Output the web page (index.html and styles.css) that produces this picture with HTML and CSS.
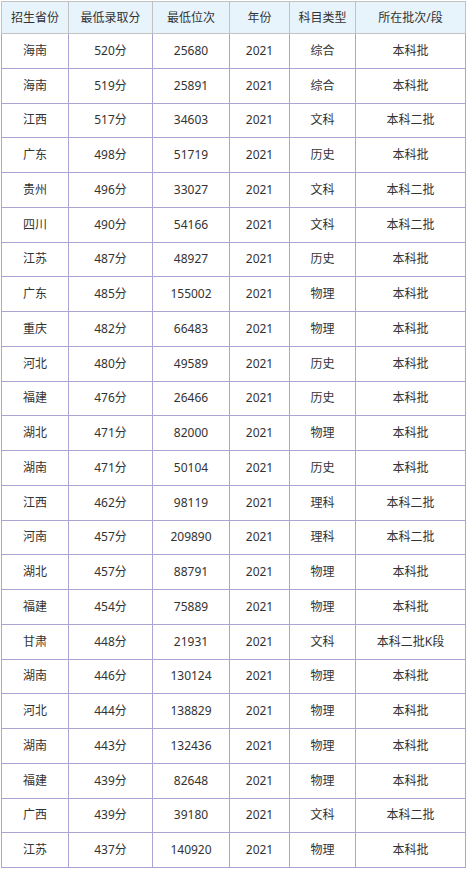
FILE: index.html
```html
<!DOCTYPE html>
<html lang="zh-CN">
<head>
<meta charset="utf-8">
<title>录取分数</title>
<link rel="stylesheet" href="styles.css">
</head>
<body>
<table class="score-table">
  <colgroup>
    <col class="c1"><col class="c2"><col class="c3"><col class="c4"><col class="c5"><col class="c6">
  </colgroup>
  <thead>
    <tr><th>招生省份</th><th>最低录取分</th><th>最低位次</th><th>年份</th><th>科目类型</th><th>所在批次/段</th></tr>
  </thead>
  <tbody>
    <tr><td>海南</td><td>520分</td><td>25680</td><td>2021</td><td>综合</td><td>本科批</td></tr>
    <tr><td>海南</td><td>519分</td><td>25891</td><td>2021</td><td>综合</td><td>本科批</td></tr>
    <tr><td>江西</td><td>517分</td><td>34603</td><td>2021</td><td>文科</td><td>本科二批</td></tr>
    <tr><td>广东</td><td>498分</td><td>51719</td><td>2021</td><td>历史</td><td>本科批</td></tr>
    <tr><td>贵州</td><td>496分</td><td>33027</td><td>2021</td><td>文科</td><td>本科二批</td></tr>
    <tr><td>四川</td><td>490分</td><td>54166</td><td>2021</td><td>文科</td><td>本科二批</td></tr>
    <tr><td>江苏</td><td>487分</td><td>48927</td><td>2021</td><td>历史</td><td>本科批</td></tr>
    <tr><td>广东</td><td>485分</td><td>155002</td><td>2021</td><td>物理</td><td>本科批</td></tr>
    <tr><td>重庆</td><td>482分</td><td>66483</td><td>2021</td><td>物理</td><td>本科批</td></tr>
    <tr><td>河北</td><td>480分</td><td>49589</td><td>2021</td><td>历史</td><td>本科批</td></tr>
    <tr><td>福建</td><td>476分</td><td>26466</td><td>2021</td><td>历史</td><td>本科批</td></tr>
    <tr><td>湖北</td><td>471分</td><td>82000</td><td>2021</td><td>物理</td><td>本科批</td></tr>
    <tr><td>湖南</td><td>471分</td><td>50104</td><td>2021</td><td>历史</td><td>本科批</td></tr>
    <tr><td>江西</td><td>462分</td><td>98119</td><td>2021</td><td>理科</td><td>本科二批</td></tr>
    <tr><td>河南</td><td>457分</td><td>209890</td><td>2021</td><td>理科</td><td>本科二批</td></tr>
    <tr><td>湖北</td><td>457分</td><td>88791</td><td>2021</td><td>物理</td><td>本科批</td></tr>
    <tr><td>福建</td><td>454分</td><td>75889</td><td>2021</td><td>物理</td><td>本科批</td></tr>
    <tr><td>甘肃</td><td>448分</td><td>21931</td><td>2021</td><td>文科</td><td>本科二批K段</td></tr>
    <tr><td>湖南</td><td>446分</td><td>130124</td><td>2021</td><td>物理</td><td>本科批</td></tr>
    <tr><td>河北</td><td>444分</td><td>138829</td><td>2021</td><td>物理</td><td>本科批</td></tr>
    <tr><td>湖南</td><td>443分</td><td>132436</td><td>2021</td><td>物理</td><td>本科批</td></tr>
    <tr><td>福建</td><td>439分</td><td>82648</td><td>2021</td><td>物理</td><td>本科批</td></tr>
    <tr><td>广西</td><td>439分</td><td>39180</td><td>2021</td><td>文科</td><td>本科二批</td></tr>
    <tr><td>江苏</td><td>437分</td><td>140920</td><td>2021</td><td>物理</td><td>本科批</td></tr>
  </tbody>
</table>
</body>
</html>
```

FILE: styles.css
```css
html, body {
  margin: 0;
  padding: 0;
  background: #ffffff;
}
body {
  padding: 1px 0 0 1px;
  font-family: "Noto Sans", "Noto Sans CJK SC", sans-serif;
  font-size: 12px;
  color: #333333;
}
.score-table {
  border-collapse: collapse;
  table-layout: fixed;
  width: 465px;
}
.c1 { width: 67px; }
.c2 { width: 84px; }
.c3 { width: 77px; }
.c4 { width: 60px; }
.c5 { width: 66px; }
.c6 { width: 110px; }
.score-table th {
  height: 31px;
  padding: 0;
  background: #e8f4fc;
  border: 1px solid #c2c2c2;
  font-weight: normal;
  text-align: center;
  vertical-align: middle;
  line-height: 16px;
}
.score-table td {
  height: 33.75px;
  padding: 0;
  border: 1px solid #aca3d4;
  text-align: center;
  vertical-align: middle;
  line-height: 16px;
}
```
